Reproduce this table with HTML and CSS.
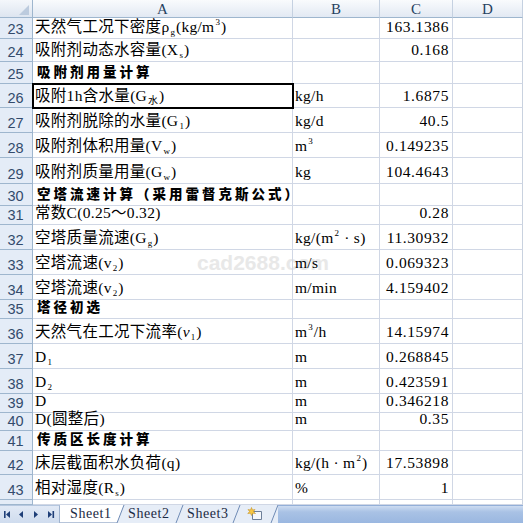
FILE: index.html
```html
<!DOCTYPE html>
<html lang="zh-CN">
<head>
<meta charset="utf-8">
<title>Sheet1</title>
<link rel="stylesheet" href="styles.css">
</head>
<body>
<div class="sheet">
  <div class="row hdr">
    <div class="corner"><span class="tri"></span></div>
    <div class="ch a">A</div>
    <div class="ch b">B</div>
    <div class="ch c">C</div>
    <div class="ch d">D</div>
  </div>

  <div class="row r21"><div class="rh">23</div><div class="cell a"><span class="v"><span class="z">天然气工况下密度</span>ρ<sub>g</sub>(kg/m<sup>3</sup>)</span></div><div class="cell b"></div><div class="cell c">163.1386</div><div class="cell d"></div></div>
  <div class="row r23"><div class="rh">24</div><div class="cell a"><span class="v"><span class="z">吸附剂动态水容量</span>(X<sub>s</sub>)</span></div><div class="cell b"></div><div class="cell c">0.168</div><div class="cell d"></div></div>
  <div class="row r22"><div class="rh">25</div><div class="cell a"><span class="t">吸附剂用量计算</span></div><div class="cell b"></div><div class="cell c"></div><div class="cell d"></div></div>
  <div class="row r24"><div class="rh">26</div><div class="cell a sel"><span class="v"><span class="z">吸附</span>1h<span class="z">含水量</span>(G<sub class="zs">水</sub>)</span></div><div class="cell b">kg/h</div><div class="cell c">1.6875</div><div class="cell d"></div></div>
  <div class="row r25"><div class="rh">27</div><div class="cell a"><span class="v"><span class="z">吸附剂脱除的水量</span>(G<sub>1</sub>)</span></div><div class="cell b">kg/d</div><div class="cell c">40.5</div><div class="cell d"></div></div>
  <div class="row r25"><div class="rh">28</div><div class="cell a"><span class="v"><span class="z">吸附剂体积用量</span>(V<sub>w</sub>)</span></div><div class="cell b"><span class="v">m<sup>3</sup></span></div><div class="cell c">0.149235</div><div class="cell d"></div></div>
  <div class="row r26"><div class="rh">29</div><div class="cell a"><span class="v"><span class="z">吸附剂质量用量</span>(G<sub>w</sub>)</span></div><div class="cell b">kg</div><div class="cell c">104.4643</div><div class="cell d"></div></div>
  <div class="row r22"><div class="rh">30</div><div class="cell a"><span class="t">空塔流速计算（采用雷督克斯公式）</span></div><div class="cell b"></div><div class="cell c"></div><div class="cell d"></div></div>
  <div class="row r19"><div class="rh">31</div><div class="cell a"><span class="v"><span class="z">常数</span>C(0.25<span class="z">～</span>0.32)</span></div><div class="cell b"></div><div class="cell c">0.28</div><div class="cell d"></div></div>
  <div class="row r25"><div class="rh">32</div><div class="cell a"><span class="v"><span class="z">空塔质量流速</span>(G<sub>g</sub>)</span></div><div class="cell b"><span class="v">kg/(m<sup>2</sup> · s)</span></div><div class="cell c">11.30932</div><div class="cell d"></div></div>
  <div class="row r25"><div class="rh">33</div><div class="cell a"><span class="v"><span class="z">空塔流速</span>(v<sub>2</sub>)</span></div><div class="cell b">m/s</div><div class="cell c">0.069323</div><div class="cell d"></div></div>
  <div class="row r25"><div class="rh">34</div><div class="cell a"><span class="v"><span class="z">空塔流速</span>(v<sub>2</sub>)</span></div><div class="cell b">m/min</div><div class="cell c">4.159402</div><div class="cell d"></div></div>
  <div class="row r19"><div class="rh">35</div><div class="cell a"><span class="t">塔径初选</span></div><div class="cell b"></div><div class="cell c"></div><div class="cell d"></div></div>
  <div class="row r25"><div class="rh">36</div><div class="cell a"><span class="v"><span class="z">天然气在工况下流率</span>(<i>v</i><sub>1</sub>)</span></div><div class="cell b"><span class="v">m<sup>3</sup>/h</span></div><div class="cell c">14.15974</div><div class="cell d"></div></div>
  <div class="row r25"><div class="rh">37</div><div class="cell a"><span class="v">D<sub>1</sub></span></div><div class="cell b">m</div><div class="cell c">0.268845</div><div class="cell d"></div></div>
  <div class="row r25"><div class="rh">38</div><div class="cell a"><span class="v">D<sub>2</sub></span></div><div class="cell b">m</div><div class="cell c">0.423591</div><div class="cell d"></div></div>
  <div class="row r19"><div class="rh">39</div><div class="cell a">D</div><div class="cell b">m</div><div class="cell c">0.346218</div><div class="cell d"></div></div>
  <div class="row r18"><div class="rh">40</div><div class="cell a"><span class="v">D(<span class="z">圆整后</span>)</span></div><div class="cell b">m</div><div class="cell c">0.35</div><div class="cell d"></div></div>
  <div class="row r20"><div class="rh">41</div><div class="cell a"><span class="t">传质区长度计算</span></div><div class="cell b"></div><div class="cell c"></div><div class="cell d"></div></div>
  <div class="row r24"><div class="rh">42</div><div class="cell a"><span class="v"><span class="z">床层截面积水负荷</span>(q)</span></div><div class="cell b"><span class="v">kg/(h · m<sup>2</sup>)</span></div><div class="cell c">17.53898</div><div class="cell d"></div></div>
  <div class="row r25"><div class="rh">43</div><div class="cell a"><span class="v"><span class="z">相对湿度</span>(R<sub>s</sub>)</span></div><div class="cell b">%</div><div class="cell c">1</div><div class="cell d"></div></div>
  <div class="row r5"><div class="rh"></div><div class="cell a"></div><div class="cell b"></div><div class="cell c"></div><div class="cell d"></div></div>

  <div class="watermark">cad2688.com</div>
</div>

<div class="tabbar">
  <div class="nav">
    <svg width="60" height="18" viewBox="0 0 60 18">
      <g fill="#1f3f78">
        <rect x="4" y="5" width="1.6" height="7"/>
        <path d="M6 8.5 L10 5 L10 12 Z"/>
        <path d="M19 8.5 L23 5 L23 12 Z"/>
        <path d="M34 5 L38 8.5 L34 12 Z"/>
        <path d="M48 5 L52 8.5 L48 12 Z"/>
        <rect x="52.5" y="5" width="1.6" height="7"/>
      </g>
    </svg>
  </div>
  <div class="tabs">
    <svg class="tabshapes" width="218" height="18" viewBox="0 0 218 18">
      <path d="M0 0 H64 L57 18 H0 Z" fill="#ffffff"/>
      <path d="M0 18 H57" stroke="#6f8bb5" stroke-width="1"/>
      <g stroke="#6f8bb5" stroke-width="1" fill="none">
        <path d="M57 18 L64 0"/>
        <path d="M116 18 L123 0"/>
        <path d="M173 18 L180 0"/>
        <path d="M211 18 L218 0"/>
      </g>
    </svg>
    <div class="tab t1 active">Sheet1</div>
    <div class="tab t2">Sheet2</div>
    <div class="tab t3">Sheet3</div>
    <div class="tab ins">
      <svg width="16" height="14" viewBox="0 0 16 14">
        <path d="M5.5 4.5 H14.5 V12.5 H5.5 Z" fill="#f4f7fb" stroke="#6d7f99"/>
        <path d="M4.5 0.5 L5.5 3 L8 2.5 L6.5 4.5 L8.5 6.5 L5.8 6.2 L4.5 8.5 L3.5 6.2 L0.8 6.5 L2.5 4.5 L1 2.5 L3.5 3 Z" fill="#f6c744" stroke="#c8952b" stroke-width="0.6"/>
      </svg>
    </div>
  </div>
  <div class="scroll"></div>
</div>
</body>
</html>
```
FILE: styles.css
```css
html {
  background: #fff;
}

html, body {
  margin: 0;
  padding: 0;
  width: 523px;
  height: 523px;
  overflow: hidden;
}

body {
  font-family: "Liberation Serif", "Noto Sans CJK SC", serif;
  font-size: 15.5px;
  color: #000;
}

.sheet {
  position: relative;
  z-index: 0;
}

.row {
  display: flex;
}

.hdr { height: 18px; }
.r5 { height: 5px; }
.r18 { height: 18px; }
.r19 { height: 19px; }
.r20 { height: 20px; }
.r21 { height: 21px; }
.r22 { height: 22px; }
.r23 { height: 23px; }
.r24 { height: 24px; }
.r25 { height: 25px; }
.r26 { height: 26px; }

.corner {
  width: 33px;
  box-sizing: border-box;
  border-right: 1px solid #9eb6ce;
  border-bottom: 1px solid #9eb6ce;
  background: linear-gradient(#f4f7fb, #dde5f0);
  position: relative;
}

.tri {
  position: absolute;
  right: 3px;
  bottom: 2px;
  width: 0;
  height: 0;
  border-left: 10px solid transparent;
  border-bottom: 10px solid #bccbde;
}

.ch {
  box-sizing: border-box;
  border-right: 1px solid #c5d1e1;
  border-bottom: 1px solid #9eb6ce;
  background: linear-gradient(#f9fbfd, #e2e9f3);
  color: #27415f;
  font-family: "Liberation Serif", serif;
  font-size: 15px;
  display: flex;
  align-items: center;
  justify-content: center;
  padding-top: 1px;
}

.a { width: 260px; }
.b { width: 87px; }
.c { width: 73px; }
.d { width: 70px; }

.rh {
  width: 33px;
  box-sizing: border-box;
  border-right: 1px solid #9eb6ce;
  border-bottom: 1px solid #9eb6ce;
  background: #e4ecf7;
  color: #334b6c;
  font-family: "Liberation Sans", sans-serif;
  font-size: 14.5px;
  display: flex;
  align-items: flex-end;
  justify-content: center;
  padding: 0 1px 1px 0;
  line-height: 16px;
}

.cell {
  box-sizing: border-box;
  border-right: 1px solid #d0d7e5;
  border-bottom: 1px solid #d0d7e5;
  display: flex;
  align-items: flex-end;
  padding: 0 3px 3px 2px;
  white-space: nowrap;
  line-height: 16px;
  letter-spacing: 0.3px;
}

.cell.c {
  justify-content: flex-end;
  letter-spacing: 0.6px;
  padding-right: 3px;
}

.cell.d { border-right: 1px solid #c9d2df; }

.v {
  white-space: nowrap;
}

.z {
  font-family: "Noto Sans CJK SC", sans-serif;
  font-weight: 400;
  font-size: 15.5px;
  letter-spacing: 0.3px;
}

.t {
  font-family: "Noto Sans CJK SC", sans-serif;
  font-weight: 900;
  font-size: 13.5px;
  letter-spacing: 3px;
  padding-left: 2px;
  margin-bottom: 1px;
}

sub {
  font-size: 9px;
  line-height: 0;
  vertical-align: -3px;
  letter-spacing: 0;
  margin: 0 1px;
}

sub.zs {
  font-family: "Noto Sans CJK SC", sans-serif;
  font-size: 10px;
}

sup {
  font-size: 9px;
  line-height: 0;
  vertical-align: 7px;
  letter-spacing: 0;
  margin: 0 1px;
}

.sel {
  outline: 2px solid #000;
  outline-offset: -1px;
  position: relative;
  z-index: 1;
}

.watermark {
  position: absolute;
  left: 197px;
  top: 251px;
  z-index: -1;
  font-family: "Liberation Sans", Arial, sans-serif;
  font-weight: bold;
  font-size: 21px;
  color: #e8e8e8;
}

.tabbar {
  display: flex;
  height: 18px;
  background: linear-gradient(#e2eaf6, #cfdcee);
}

.nav {
  width: 60px;
  box-sizing: border-box;
  border-right: 1px solid #9fb3cf;
  border-top: 1px solid #b5c7df;
}

.nav svg {
  display: block;
}

.tabs {
  position: relative;
  display: flex;
  width: 218px;
  background: #e6edf7;
}

.tabshapes {
  position: absolute;
  left: 0;
  top: 0;
}

.tab {
  position: relative;
  box-sizing: border-box;
  width: 59px;
  padding-left: 9px;
  font-family: "Liberation Serif", serif;
  font-size: 14px;
  letter-spacing: 0.6px;
  color: #1b2a44;
  display: flex;
  align-items: center;
  line-height: 16px;
}

.tab.t1 { padding-left: 10px; }

.tab.ins {
  width: 41px;
  padding-left: 10px;
}

.tab.ins svg {
  display: block;
}

.scroll {
  flex: 1;
  background: linear-gradient(#cddcf1, #a9c2e5 35%, #9ab7e0);
  border-top: 1px solid #93afd8;
}
```
